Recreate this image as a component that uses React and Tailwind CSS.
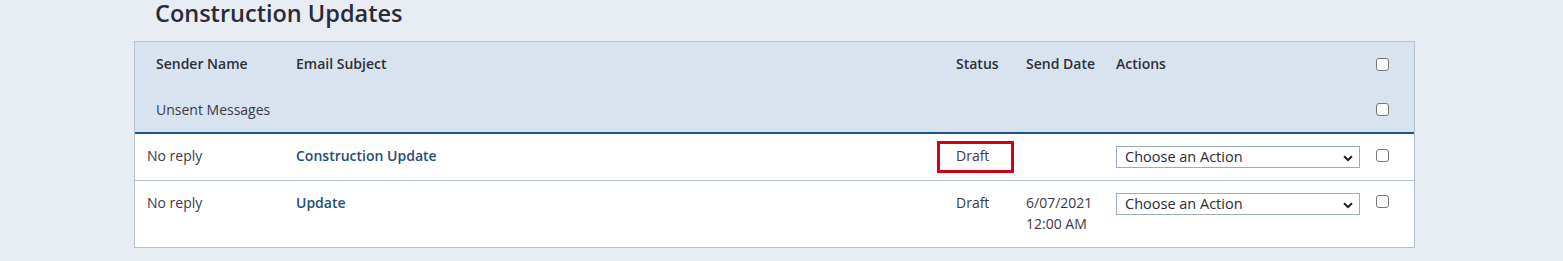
import React from "react";

const font = { fontFamily: "'Open Sans', 'Noto Sans', sans-serif" };

function Chevron() {
  return (
    <svg width="10" height="7" viewBox="0 0 10 7" className="absolute right-[6px] top-[8px]">
      <path d="M1 1.2 L5 5 L9 1.2" fill="none" stroke="#222" strokeWidth="2" />
    </svg>
  );
}

function Select() {
  return (
    <div className="relative w-[244px] h-[22px] border border-[#9aacbf] bg-white flex items-center pl-[8px] text-[14.5px] text-[#2a2a3a]">
      Choose an Action
      <Chevron />
    </div>
  );
}

function Box() {
  return <div className="w-[13px] h-[13px] border border-[#767676] rounded-[3px] bg-white" />;
}

const cols = "grid grid-cols-[149px_660px_70px_90px_260px_1fr]";

export default function App() {
  return (
    <div className="w-[1563px] h-[261px] bg-[#e8edf3] overflow-hidden" style={font}>
      <div className="pl-[155px] h-[41px] pt-[1px] text-[23.5px] font-semibold text-[#2a2a38] leading-[24px]">
        Construction Updates
      </div>
      <div className="ml-[134px] w-[1281px] border border-[#b3c2d2] bg-white">
        <div className="bg-[#d9e3ef] border-b-2 border-[#1b5688]">
          <div className={`${cols} h-[45px] items-center text-[14px] font-semibold text-[#2e2e38]`}>
            <div className="pl-[21px] -mt-[2px]">Sender Name</div>
            <div className="pl-[12px] -mt-[2px]">Email Subject</div>
            <div className="pl-[12px] -mt-[2px]">Status</div>
            <div className="pl-[12px] -mt-[2px]">Send Date</div>
            <div className="pl-[12px] -mt-[2px]">Actions</div>
            <div className="pl-[12px]"><Box /></div>
          </div>
          <div className={`${cols} h-[45px] items-center text-[14px] text-[#3a3a48]`}>
            <div className="pl-[21px] col-span-5">Unsent Messages</div>
            <div className="pl-[12px]"><Box /></div>
          </div>
        </div>
        <div className={`${cols} h-[47px] border-b border-[#b3c2d2] text-[14px] text-[#3a3a48]`}>
          <div className="pl-[12px] pt-[11px]">No reply</div>
          <div className="pl-[12px] pt-[11px] font-semibold text-[#1d4f7c]">Construction Update</div>
          <div className="pl-[12px] pt-[11px] relative">
            Draft
            <div className="absolute left-[-7px] top-[7px] w-[77px] h-[32px] border-[3px] border-[#d0021b]" />
          </div>
          <div className="pl-[12px] pt-[11px]"></div>
          <div className="pl-[12px] pt-[12px]"><Select /></div>
          <div className="pl-[12px] pt-[15px]"><Box /></div>
        </div>
        <div className={`${cols} h-[66px] text-[14px] text-[#3a3a48]`}>
          <div className="pl-[12px] pt-[11px]">No reply</div>
          <div className="pl-[12px] pt-[11px] font-semibold text-[#1d4f7c]">Update</div>
          <div className="pl-[12px] pt-[11px]">Draft</div>
          <div className="pl-[12px] pt-[11px] leading-[21px]">6/07/2021<br />12:00 AM</div>
          <div className="pl-[12px] pt-[12px]"><Select /></div>
          <div className="pl-[12px] pt-[14px]"><Box /></div>
        </div>
      </div>
    </div>
  );
}
